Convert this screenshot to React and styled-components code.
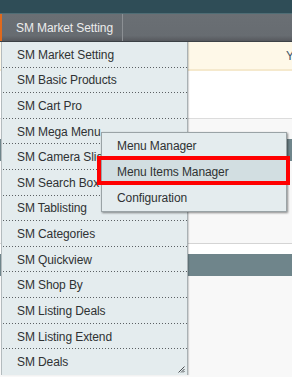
import React from "react";
import styled, { createGlobalStyle } from "styled-components";

const GlobalStyle = createGlobalStyle`
  html, body { margin: 0; padding: 0; }
  body {
    background: #f8f8f8;
    font-family: "Liberation Sans", Arial, sans-serif;
    font-size: 12px;
  }
`;

const Page = styled.div`
  position: relative;
  width: 292px;
  height: 377px;
  overflow: hidden;
  background: #f8f8f8;
`;

const TopBar = styled.div`
  height: 13px;
  background: #2f4d57;
  border-bottom: 1px solid #4f6d75;
`;

const NavBar = styled.div`
  display: flex;
  height: 27px;
  background: linear-gradient(to bottom, #6a6f74 0%, #676c71 80%, #56595e 100%);
  border-bottom: 1px solid #3d4247;
`;

const Tab = styled.div`
  display: flex;
  align-items: center;
  width: 123px;
  padding-left: 14px;
  box-sizing: border-box;
  border-left: 2px solid #e0691c;
  border-right: 1px solid #8c9094;
  color: #ececec;
  letter-spacing: -0.1px;
`;

const Notice = styled.div`
  height: 27px;
  background: #fef8e8;
  border-bottom: 2px solid #f5e9cd;
  display: flex;
  align-items: center;
  padding-left: 286px;
  white-space: nowrap;
  color: #3f5568;
`;

const WhiteBlock = styled.div`
  height: ${(p) => p.$h}px;
  background: #ffffff;
  border-bottom: 1px solid ${(p) => p.$line || "transparent"};
`;

const Plain = styled.div`
  height: ${(p) => p.$h}px;
  background: ${(p) => p.$bg || "#f8f8f8"};
  border-bottom: ${(p) => (p.$line ? `1px solid ${p.$line}` : "none")};
`;

const Band = styled.div`
  height: ${(p) => p.$h}px;
  background: #6f858b;
`;

const Dropdown = styled.ul`
  position: absolute;
  top: 42px;
  left: 1px;
  width: 187px;
  margin: 0;
  padding: 0;
  list-style: none;
  box-sizing: border-box;
  background: #e4ecee;
  border-left: 1px solid #b3bbbe;
  border-right: 1px solid #a9b1b4;
  box-shadow: 1px 0 1px rgba(0, 0, 0, 0.15);
`;

const Item = styled.li`
  position: relative;
  height: 25.62px;
  box-sizing: border-box;
  padding-left: 15px;
  display: flex;
  align-items: center;
  color: #2f3233;
  white-space: nowrap;
  letter-spacing: -0.1px;
  background-image: ${(p) =>
    p.$last ? "none" : "linear-gradient(to right, #5b6063 1px, transparent 1px)"};
  background-size: 3px 1px;
  background-repeat: repeat-x;
  background-position: 1px 100%;
`;

const Submenu = styled.ul`
  position: absolute;
  top: 13px;
  left: 99px;
  width: 186px;
  margin: 0;
  padding: 0;
  list-style: none;
  box-sizing: border-box;
  background: #e4ecee;
  border: 1px solid #9aa3a6;
  box-shadow: 1px 1px 2px rgba(0, 0, 0, 0.45);
  z-index: 2;
`;

const SubItem = styled.li`
  height: 26px;
  padding-left: 15px;
  display: flex;
  align-items: center;
  color: #2f3233;
  letter-spacing: -0.1px;
  background: ${(p) => (p.$active ? "#d2dee1" : "transparent")};
`;

const Highlight = styled.div`
  position: absolute;
  top: 23px;
  left: -5px;
  width: 193px;
  height: 29px;
  box-sizing: border-box;
  border: 4px solid #ff0000;
  pointer-events: none;
`;

const Grip = styled.svg`
  position: absolute;
  right: 2px;
  bottom: 2px;
`;

const items = [
  "SM Market Setting",
  "SM Basic Products",
  "SM Cart Pro",
  "SM Mega Menu",
  "SM Camera Slider",
  "SM Search Box",
  "SM Tablisting",
  "SM Categories",
  "SM Quickview",
  "SM Shop By",
  "SM Listing Deals",
  "SM Listing Extend",
  "SM Deals",
];

export default function App() {
  return (
    <>
      <GlobalStyle />
      <Page>
        <TopBar />
        <NavBar>
          <Tab>SM Market Setting</Tab>
        </NavBar>
        <Notice>You have 1 new message</Notice>
        <WhiteBlock $h={47} $line="#dcdcdc" />
        <Plain $h={20} />
        <Band $h={22} />
        <Plain $h={82} $line="#d4d4d4" />
        <Plain $h={10} $bg="#ffffff" />
        <Band $h={22} />
        <Plain $h={100} />

        <Dropdown>
          {items.map((t, i) => (
            <Item key={t} $last={i === items.length - 1}>
              {t}
              {t === "SM Mega Menu" && (
                <Submenu>
                  <SubItem>Menu Manager</SubItem>
                  <SubItem $active>Menu Items Manager</SubItem>
                  <SubItem>Configuration</SubItem>
                  <Highlight />
                </Submenu>
              )}
              {i === items.length - 1 && (
                <Grip width="7" height="7" viewBox="0 0 7 7">
                  <path d="M6.5 0.5 L0.5 6.5 M6.5 3 L3 6.5 M6.5 5 L5 6.5" stroke="#4a4f52" strokeWidth="1" />
                </Grip>
              )}
            </Item>
          ))}
        </Dropdown>
      </Page>
    </>
  );
}
